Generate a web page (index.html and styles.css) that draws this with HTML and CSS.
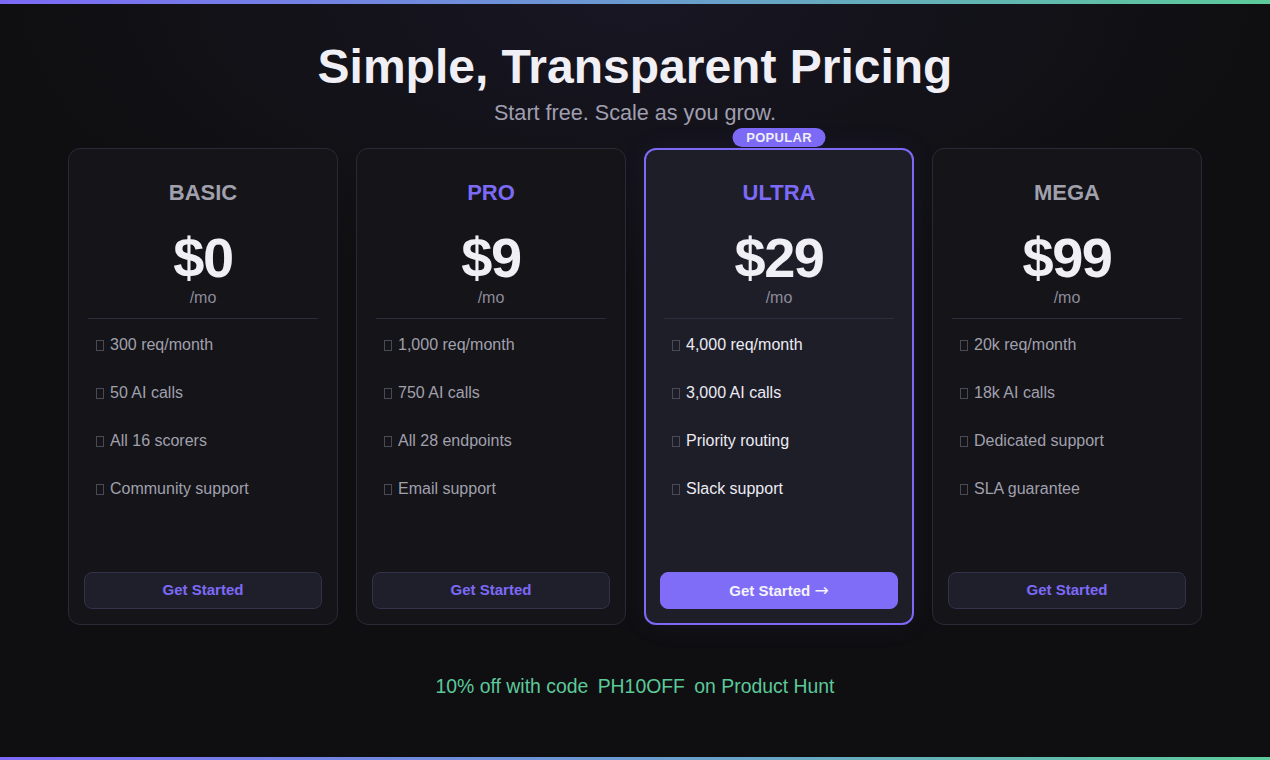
FILE: index.html
```html
<!DOCTYPE html>
<html lang="en">
<head>
<meta charset="utf-8">
<title>Pricing</title>
<link rel="stylesheet" href="styles.css">
</head>
<body>
<div class="page">
  <div class="bar bar-top"></div>
  <header class="hero">
    <h1 class="hero-title">Simple, Transparent Pricing</h1>
    <p class="hero-sub">Start free. Scale as you grow.</p>
  </header>
  <main class="plans">
    <section class="card">
      <h2 class="plan-name">BASIC</h2>
      <div class="price">$0</div>
      <div class="per">/mo</div>
      <hr class="divider">
      <ul class="features">
        <li><span class="tick"></span>300 req/month</li>
        <li><span class="tick"></span>50 AI calls</li>
        <li><span class="tick"></span>All 16 scorers</li>
        <li><span class="tick"></span>Community support</li>
      </ul>
      <button class="cta">Get Started</button>
    </section>
    <section class="card">
      <h2 class="plan-name accent">PRO</h2>
      <div class="price">$9</div>
      <div class="per">/mo</div>
      <hr class="divider">
      <ul class="features">
        <li><span class="tick"></span>1,000 req/month</li>
        <li><span class="tick"></span>750 AI calls</li>
        <li><span class="tick"></span>All 28 endpoints</li>
        <li><span class="tick"></span>Email support</li>
      </ul>
      <button class="cta">Get Started</button>
    </section>
    <section class="card card-popular">
      <span class="badge">POPULAR</span>
      <h2 class="plan-name accent">ULTRA</h2>
      <div class="price">$29</div>
      <div class="per">/mo</div>
      <hr class="divider">
      <ul class="features features-bright">
        <li><span class="tick"></span>4,000 req/month</li>
        <li><span class="tick"></span>3,000 AI calls</li>
        <li><span class="tick"></span>Priority routing</li>
        <li><span class="tick"></span>Slack support</li>
      </ul>
      <button class="cta cta-primary">Get Started <span class="arrow">→</span></button>
    </section>
    <section class="card">
      <h2 class="plan-name">MEGA</h2>
      <div class="price">$99</div>
      <div class="per">/mo</div>
      <hr class="divider">
      <ul class="features">
        <li><span class="tick"></span>20k req/month</li>
        <li><span class="tick"></span>18k AI calls</li>
        <li><span class="tick"></span>Dedicated support</li>
        <li><span class="tick"></span>SLA guarantee</li>
      </ul>
      <button class="cta">Get Started</button>
    </section>
  </main>
  <p class="promo">10% off with code <span class="code">PH10OFF</span> on Product Hunt</p>
  <div class="bar bar-bottom"></div>
</div>
</body>
</html>
```
FILE: styles.css
```css
* { box-sizing: border-box; }

html, body {
  margin: 0;
  padding: 0;
  height: 100%;
}

body {
  background-color: #0f0f11;
  background-image: radial-gradient(ellipse 900px 420px at 50% 0%, rgba(124, 106, 247, 0.08), rgba(124, 106, 247, 0) 70%);
  color: #f0eff5;
  font-family: "Liberation Sans", Arial, sans-serif;
}

.page {
  min-height: 760px;
  height: 760px;
  display: flex;
  flex-direction: column;
}

.bar {
  flex: none;
  background: linear-gradient(90deg, #7c6af7 0%, #6a9bd0 50%, #5ccb9a 100%);
}
.bar-top { height: 4px; }
.bar-bottom { height: 3px; margin-top: auto; }

.hero {
  text-align: center;
  padding-top: 35px;
}

.hero-title {
  margin: 0;
  font-size: 48px;
  line-height: 55px;
  font-weight: 700;
  color: #f0eff5;
}

.hero-sub {
  margin: 7px 0 0;
  font-size: 21.6px;
  line-height: 24px;
  color: #a09fb0;
}

.plans {
  display: grid;
  grid-template-columns: repeat(4, 270px);
  gap: 18px;
  justify-content: center;
  margin-top: 23px;
}

.card {
  position: relative;
  display: flex;
  flex-direction: column;
  height: 477px;
  padding: 30px 15px 15px;
  background: #141419;
  border: 1px solid #2a2a37;
  border-radius: 12px;
  text-align: center;
}

.card-popular {
  background: #1e1e28;
  border: 2px solid #7c6af7;
  padding: 29px 14px 14px;
  box-shadow: 0 0 30px rgba(124, 106, 247, 0.07);
}

.badge {
  position: absolute;
  top: -22px;
  left: 50%;
  transform: translateX(-50%);
  width: 93px;
  height: 19px;
  line-height: 19px;
  border-radius: 10px;
  background: #7c6af7;
  color: #f0eff5;
  font-size: 13px;
  font-weight: 700;
  letter-spacing: 0.3px;
}

.plan-name {
  margin: 0;
  font-size: 22px;
  line-height: 28px;
  font-weight: 700;
  color: #a1a0ad;
}
.plan-name.accent { color: #7c6af7; }

.price {
  margin-top: 21px;
  font-size: 56px;
  line-height: 60px;
  font-weight: 700;
  letter-spacing: -1.5px;
  color: #f0eff5;
}

.per {
  font-size: 16px;
  line-height: 20px;
  color: #8d8c9a;
}

.divider {
  margin: 10px 4px 0;
  border: 0;
  height: 1px;
  background: #2d2c3c;
}

.features {
  list-style: none;
  margin: 14px 0 0;
  padding: 0 0 0 12px;
  display: flex;
  flex-direction: column;
  gap: 24px;
  text-align: left;
  font-size: 16px;
  line-height: 24px;
  color: #a1a0ad;
}

.features-bright { color: #ecebf3; }

.tick {
  display: inline-block;
  width: 8px;
  height: 11px;
  margin-right: 6px;
  border: 1px solid #4a4a57;
  vertical-align: -1px;
}

.cta {
  margin-top: auto;
  height: 37px;
  width: 100%;
  padding: 0 0 1px;
  border-radius: 8px;
  border: 1px solid #32324a;
  background: #1f1f2b;
  color: #7c6af7;
  font-family: "Liberation Sans", Arial, sans-serif;
  font-size: 15px;
  line-height: 18px;
  font-weight: 700;
  cursor: pointer;
}

.cta-primary {
  background: #7f6df8;
  border-color: #7f6df8;
  color: #f4f3fb;
}

.arrow {
  font-family: "DejaVu Sans", sans-serif;
  font-weight: 400;
  font-size: 17px;
  line-height: 18px;
}

.promo {
  margin: 49px 0 0;
  text-align: center;
  font-size: 19.4px;
  line-height: 24px;
  color: #5cc99a;
}

.code {
  margin: 0 4px;
}
```
